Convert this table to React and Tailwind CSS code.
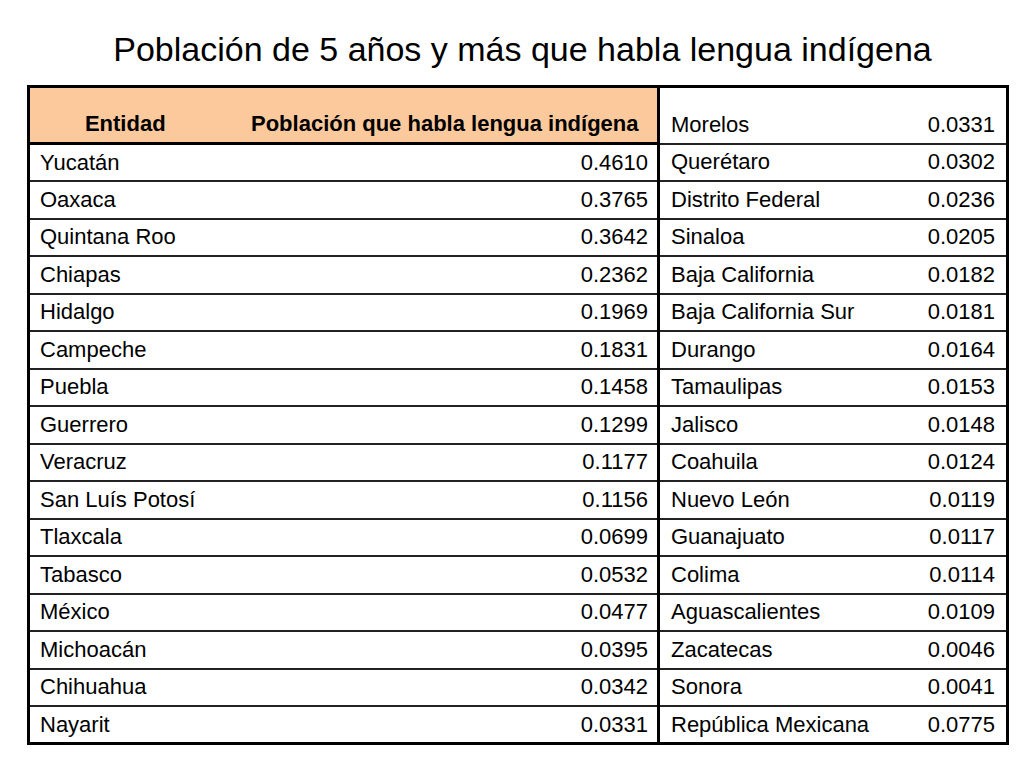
import React from 'react';

const rows = [
  ['Yucatán', '0.4610', 'Querétaro', '0.0302'],
  ['Oaxaca', '0.3765', 'Distrito Federal', '0.0236'],
  ['Quintana Roo', '0.3642', 'Sinaloa', '0.0205'],
  ['Chiapas', '0.2362', 'Baja California', '0.0182'],
  ['Hidalgo', '0.1969', 'Baja California Sur', '0.0181'],
  ['Campeche', '0.1831', 'Durango', '0.0164'],
  ['Puebla', '0.1458', 'Tamaulipas', '0.0153'],
  ['Guerrero', '0.1299', 'Jalisco', '0.0148'],
  ['Veracruz', '0.1177', 'Coahuila', '0.0124'],
  ['San Luís Potosí', '0.1156', 'Nuevo León', '0.0119'],
  ['Tlaxcala', '0.0699', 'Guanajuato', '0.0117'],
  ['Tabasco', '0.0532', 'Colima', '0.0114'],
  ['México', '0.0477', 'Aguascalientes', '0.0109'],
  ['Michoacán', '0.0395', 'Zacatecas', '0.0046'],
  ['Chihuahua', '0.0342', 'Sonora', '0.0041'],
  ['Nayarit', '0.0331', 'República Mexicana', '0.0775'],
];

export default function App() {
  return (
    <div className="w-[1024px] h-[768px] bg-white text-black font-['Liberation_Sans',Arial,sans-serif]">
      {/* Título */}
      <h1 className="pt-[30px] pl-[21px] text-center text-[34px] leading-[39px]">
        Población de 5 años y más que habla lengua indígena
      </h1>

      <table className="mt-[16px] ml-[27px] w-[979px] table-fixed border-collapse border-[3px] border-black text-[22px] leading-[26px]">
        <colgroup>
          <col className="w-[200px]" />
          <col className="w-[430px]" />
          <col className="w-[210px]" />
          <col className="w-[139px]" />
        </colgroup>
        <tbody>
          <tr className="h-[57px]">
            <td className="bg-[#fbc99b] border-b-[3px] border-black align-bottom text-center font-bold pb-[5px] pr-[8px]">Entidad</td>
            <td className="bg-[#fbc99b] border-b-[3px] border-r-[3px] border-black align-bottom text-center font-bold pb-[5px] pl-[4px]">
              Población que habla lengua indígena
            </td>
            <td className="border-b-2 border-[#222] align-bottom pl-[11px] pb-[5px]">Morelos</td>
            <td className="border-b-2 border-[#222] align-bottom text-right pr-[11px] pb-[5px]">0.0331</td>
          </tr>
          {rows.map((r, i) => (
            <tr key={i} className="h-[37.5px]">
              <td className="border-t-2 border-[#222] pl-[10px] whitespace-nowrap">{r[0]}</td>
              <td className="border-t-2 border-r-[3px] border-[#222] border-r-black text-right pr-[9px]">{r[1]}</td>
              <td className="border-t-2 border-[#222] pl-[11px] whitespace-nowrap">{r[2]}</td>
              <td className="border-t-2 border-[#222] text-right pr-[11px]">{r[3]}</td>
            </tr>
          ))}
        </tbody>
      </table>
    </div>
  );
}
